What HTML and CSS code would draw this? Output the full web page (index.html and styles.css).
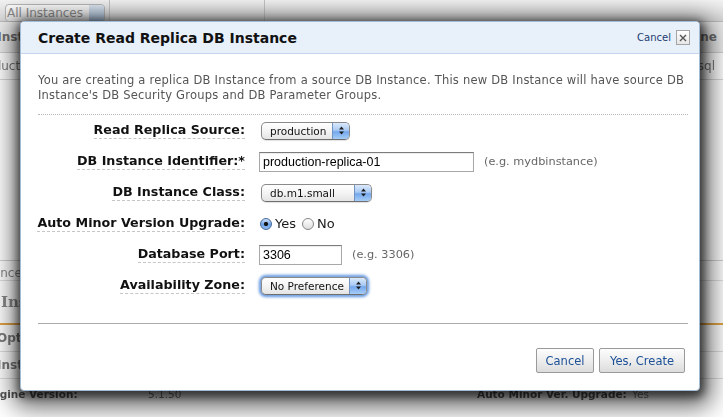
FILE: index.html
```html
<!DOCTYPE html>
<html>
<head>
<meta charset="utf-8">
<title>Create Read Replica DB Instance</title>
<link rel="stylesheet" href="styles.css">
</head>
<body>
<div class="app">
  <div class="toolbar">
    <div class="bg-select"><span class="bg-select-text">All Instances</span><span class="bg-select-btn"></span></div>
    <div class="tb-sep"></div>
    <div class="tb-sep tb-sep-2"></div>
  </div>
  <div class="grid-head">
    <span class="clip-l"><span class="cut-l1">DB Instance</span></span>
    <span class="clip-r"><span>Engine</span></span>
  </div>
  <div class="grid-row">
    <span class="clip-l"><span class="cut-l2">production</span></span>
    <span class="clip-r"><span>mysql</span></span>
  </div>
  <div class="fill"></div>
  <div class="detail-bar"><span class="clip-l"><span class="cut-l3">1 DB Instance</span></span></div>
  <div class="detail-title"><span class="clip-l"><span class="cut-l4">DB Instance</span></span></div>
  <div class="tabs"></div>
  <div class="prop-row"><span class="clip-l"><span class="cut-l5">Options</span></span></div>
  <div class="prop-row"><span class="clip-l"><span class="cut-l6">Instance</span></span></div>
  <div class="prop-grid">
    <span class="pg-label">Engine Version:</span>
    <span class="pg-value">5.1.50</span>
    <span class="pg-label">Auto Minor Ver. Upgrade:</span>
    <span class="pg-value">Yes</span>
  </div>
</div>

<div class="dialog">
  <div class="dlg-head">
    <h1 class="dlg-title">Create Read Replica DB Instance</h1>
    <div class="dlg-close">
      <span class="close-link">Cancel</span>
      <span class="close-x"><svg width="8" height="8" viewBox="0 0 8 8"><path d="M1 1 L7 7 M7 1 L1 7" stroke="#555" stroke-width="1.4" fill="none"/></svg></span>
    </div>
  </div>
  <div class="dlg-body">
    <p class="intro">You are creating a replica DB Instance from a source DB Instance. This new DB Instance will have source DB<br>Instance's DB Security Groups and DB Parameter Groups.</p>
    <div class="form">
      <div class="row">
        <div class="label"><span>Read Replica Source:</span></div>
        <div class="ctrl">
          <div class="select sel-source"><span class="select-text">production</span><span class="select-btn"><svg width="7" height="11" viewBox="0 0 7 11"><path d="M3.5 1.5 L6 4.5 H1 Z M3.5 9.5 L6 6.5 H1 Z" fill="#1c1c1c"/></svg></span></div>
        </div>
      </div>
      <div class="row">
        <div class="label"><span>DB Instance Identifier:*</span></div>
        <div class="ctrl">
          <div class="text-input in-id">production-replica-01</div>
          <span class="hint">(e.g. mydbinstance)</span>
        </div>
      </div>
      <div class="row">
        <div class="label"><span>DB Instance Class:</span></div>
        <div class="ctrl">
          <div class="select sel-class"><span class="select-text">db.m1.small</span><span class="select-btn"><svg width="7" height="11" viewBox="0 0 7 11"><path d="M3.5 1.5 L6 4.5 H1 Z M3.5 9.5 L6 6.5 H1 Z" fill="#1c1c1c"/></svg></span></div>
        </div>
      </div>
      <div class="row">
        <div class="label"><span>Auto Minor Version Upgrade:</span></div>
        <div class="ctrl radios">
          <span class="radio radio-on"></span><span class="radio-text">Yes</span>
          <span class="radio radio-off"></span><span class="radio-text">No</span>
        </div>
      </div>
      <div class="row">
        <div class="label"><span>Database Port:</span></div>
        <div class="ctrl">
          <div class="text-input in-port">3306</div>
          <span class="hint">(e.g. 3306)</span>
        </div>
      </div>
      <div class="row">
        <div class="label"><span>Availability Zone:</span></div>
        <div class="ctrl">
          <div class="select sel-zone focused"><span class="select-text">No Preference</span><span class="select-btn"><svg width="7" height="11" viewBox="0 0 7 11"><path d="M3.5 1.5 L6 4.5 H1 Z M3.5 9.5 L6 6.5 H1 Z" fill="#1c1c1c"/></svg></span></div>
        </div>
      </div>
    </div>
    <div class="actions">
      <button class="btn btn-cancel">Cancel</button>
      <button class="btn btn-create">Yes, Create</button>
    </div>
  </div>
</div>
</body>
</html>
```

FILE: styles.css
```css
html, body {
  margin: 0;
  padding: 0;
}
body {
  width: 723px;
  height: 417px;
  overflow: hidden;
  position: relative;
  background: #ffffff;
  font-family: "DejaVu Sans", Verdana, sans-serif;
}

/* ---------- background application (behind modal) ---------- */
.app {
  height: 417px;
  display: flex;
  flex-direction: column;
  filter: blur(0.7px);
  color: #666;
  font-size: 12px;
  white-space: nowrap;
  overflow: hidden;
}
.toolbar {
  height: 22px;
  flex: none;
  display: flex;
  align-items: flex-start;
  background: linear-gradient(#f2f2f2, #d6d6d6);
  border-bottom: 1px solid #bcbcbc;
  box-sizing: border-box;
}
.bg-select {
  margin: 4px 0 0 5px;
  width: 100px;
  height: 18px;
  display: flex;
  align-items: center;
  box-sizing: border-box;
  border: 1px solid #b4b4b4;
  border-radius: 4px;
  background: linear-gradient(#fbfbfb, #e2e2e2);
  color: #8a8a8a;
  font-size: 12px;
}
.bg-select-text {
  flex: 1;
  padding-left: 1px;
}
.bg-select-btn {
  width: 15px;
  height: 16px;
  border-radius: 0 3px 3px 0;
  background: linear-gradient(#dbe5f0, #a6bcd4);
}
.tb-sep {
  width: 1px;
  align-self: stretch;
  background: #c2c2c2;
  margin-left: 4px;
}
.tb-sep-2 {
  margin-left: 154px;
}
.clip-l {
  width: 20px;
  overflow: hidden;
  display: flex;
  flex: none;
}
.clip-r {
  width: 21px;
  overflow: hidden;
  display: flex;
  justify-content: flex-end;
  flex: none;
}
.clip-l > span,
.clip-r > span {
  flex: none;
}
.grid-head {
  height: 31px;
  flex: none;
  box-sizing: border-box;
  display: flex;
  justify-content: space-between;
  align-items: center;
  background: #ececec;
  border-bottom: 1px solid #cfcfcf;
  font-weight: bold;
  color: #707070;
}
.grid-head .clip-r { padding-right: 6px; }
.cut-l1 { margin-left: -26px; }
.grid-row {
  height: 27px;
  flex: none;
  box-sizing: border-box;
  display: flex;
  justify-content: space-between;
  align-items: center;
  border-bottom: 1px solid #d8d8d8;
  color: #7a7a7a;
}
.grid-row .clip-r { padding-right: 8px; }
.cut-l2 { margin-left: -26px; }
.fill {
  flex: 1;
}
.detail-bar {
  height: 20px;
  flex: none;
  box-sizing: border-box;
  border-top: 1px solid #d0d0d0;
  display: flex;
  align-items: flex-end;
  color: #888;
}
.cut-l3 { margin-left: -62px; }
.detail-title {
  height: 31px;
  flex: none;
  box-sizing: border-box;
  border-top: 1px solid #e0e0e0;
  display: flex;
  align-items: flex-end;
  font-family: "DejaVu Serif", serif;
  font-weight: bold;
  font-size: 15px;
  color: #8a8a8a;
}
.cut-l4 { margin-left: -30px; }
.tabs {
  height: 12px;
  flex: none;
  border-bottom: 2px solid #e2a444;
}
.prop-row {
  height: 27px;
  flex: none;
  box-sizing: border-box;
  display: flex;
  align-items: center;
  border-bottom: 1px solid #dedede;
  font-weight: bold;
  color: #7a7a7a;
}
.cut-l5 { margin-left: -3px; }
.cut-l6 { margin-left: -3px; }
.prop-grid {
  height: 30px;
  flex: none;
  margin: 0 0 8px -15px;
  display: grid;
  grid-template-columns: 163px 329px 155px 1fr;
  align-items: center;
  font-weight: bold;
  font-size: 10.5px;
  color: #555;
}
.pg-value {
  font-weight: normal;
  color: #777;
}

/* ---------- modal dialog ---------- */
.dialog {
  position: absolute;
  left: 20px;
  top: 21px;
  width: 680px;
  height: 370px;
  box-sizing: border-box;
  background: #ffffff;
  border: 1px solid #a3bcd6;
  border-radius: 4px;
  box-shadow: 1px 3px 8px 3px rgba(0, 0, 0, 0.55), 2px 7px 24px 9px rgba(0, 0, 0, 0.6);
  display: flex;
  flex-direction: column;
  overflow: hidden;
}
.dlg-head {
  height: 32px;
  flex: none;
  box-sizing: border-box;
  display: flex;
  align-items: center;
  justify-content: space-between;
  padding: 0 9px 0 17px;
  background: #e8f0fa;
  border-bottom: 1px solid #c3d6eb;
}
.dlg-title {
  margin: 0;
  font-size: 14px;
  font-weight: bold;
  color: #111;
}
.dlg-close {
  display: flex;
  align-items: center;
}
.close-link {
  font-size: 10px;
  color: #1d3d72;
  margin-right: 5px;
}
.close-x {
  width: 14px;
  height: 15px;
  box-sizing: border-box;
  border: 1px solid #a4a4a4;
  background: linear-gradient(#ffffff, #e6e6e6);
  display: flex;
  align-items: center;
  justify-content: center;
}
.dlg-body {
  flex: 1;
  padding: 19px 11px 0 17px;
}
.intro {
  margin: 0 0 11px;
  font-size: 11.5px;
  letter-spacing: 0.22px;
  line-height: 15px;
  color: #555;
  white-space: nowrap;
}
.form {
  border-top: 1px dotted #b8b8b8;
  border-bottom: 1px solid #ababab;
  padding-bottom: 22px;
}
.row {
  height: 31px;
  display: flex;
  align-items: center;
}
.label {
  width: 207px;
  flex: none;
  margin-right: 14px;
  display: flex;
  justify-content: flex-end;
  white-space: nowrap;
}
.label span {
  flex: none;
  font-size: 12.7px;
  font-weight: bold;
  color: #111;
  border-bottom: 1px dashed #c6c6c6;
  padding-bottom: 1px;
}
.ctrl {
  display: flex;
  align-items: center;
}
.hint {
  margin-left: 10px;
  font-size: 11.3px;
  color: #666;
}

/* Aqua-like popup select */
.select {
  margin-left: 2px;
  height: 18px;
  box-sizing: border-box;
  display: flex;
  border: 1px solid #8a8a8a;
  border-bottom-color: #6f6f6f;
  border-radius: 5px;
  background: linear-gradient(#ffffff, #f4f4f4 50%, #e4e4e4);
  box-shadow: 0 1px 1px rgba(0, 0, 0, 0.12);
  overflow: hidden;
  font-size: 10.5px;
  color: #111;
}
.select-text {
  flex: 1;
  padding-left: 8px;
  line-height: 16px;
}
.select-btn {
  width: 16px;
  flex: none;
  display: flex;
  align-items: center;
  justify-content: center;
  border-left: 1px solid #7394c2;
  background: linear-gradient(#dbe9fb, #a9caf3 45%, #74a7ec 55%, #a6cdf8);
}
.sel-source { width: 89px; }
.sel-class { width: 111px; }
.sel-zone { width: 106px; }
.focused {
  box-shadow: 0 0 0 1px #7fa9e2, 0 0 3px 2px #5d93df;
}

/* text inputs */
.text-input {
  height: 20px;
  box-sizing: border-box;
  border: 1px solid #a8a8a8;
  border-top-color: #7c7c7c;
  background: #fff;
  box-shadow: inset 0 1px 1px rgba(0, 0, 0, 0.08);
  padding-left: 3px;
  font-family: "Liberation Sans", Arial, sans-serif;
  font-size: 12.5px;
  line-height: 18px;
  color: #000;
}
.in-id { width: 215px; }
.in-port { width: 83px; }

/* radios */
.radios {
  margin-left: 1px;
}
.radio {
  width: 12px;
  height: 12px;
  box-sizing: border-box;
  border-radius: 50%;
  flex: none;
}
.radio-on {
  border: 1px solid #46699a;
  background: radial-gradient(circle, #151515 0 1.8px, transparent 2.4px), linear-gradient(#cfe1f8, #6da3e8 55%, #8fbdf2);
}
.radio-off {
  margin-left: 6px;
  border: 1px solid #858585;
  background: linear-gradient(#ffffff, #dedede);
}
.radio-text {
  margin-left: 3px;
  font-size: 13px;
  color: #1a1a1a;
}

/* buttons */
.actions {
  display: flex;
  justify-content: flex-end;
  gap: 5px;
  padding: 24px 3px 0 0;
}
.btn {
  height: 25px;
  box-sizing: border-box;
  padding: 0;
  border: 1px solid #9a9a9a;
  border-radius: 2px;
  background: linear-gradient(#fdfdfd, #ececec 55%, #dcdcdc);
  color: #1b4f96;
  font-family: "DejaVu Sans", Verdana, sans-serif;
  font-size: 11.5px;
}
.btn-cancel { width: 58px; }
.btn-create { width: 86px; }
```
